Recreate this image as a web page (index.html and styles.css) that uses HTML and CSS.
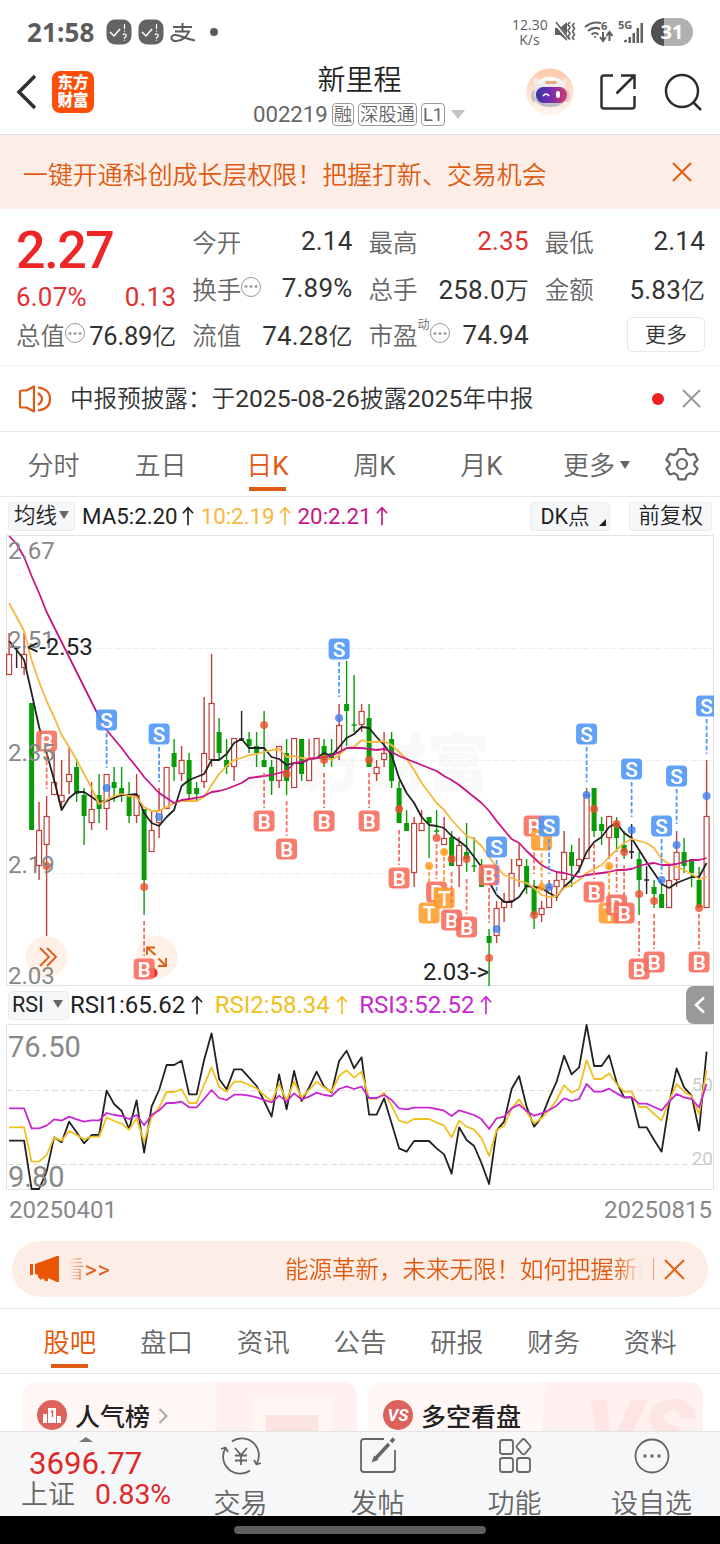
FILE: index.html
```html
<!DOCTYPE html>
<html lang="zh-CN">
<head>
    <meta charset="UTF-8">
    <meta name="viewport" content="width=device-width, initial-scale=1.0">
    <title>新里程 002219</title>
    <link rel="stylesheet" href="styles.css">
</head>
<body>
    <div class="status-bar">
        <span class="time">21:58</span>
        <svg class="app-dot" width="26" height="26" viewBox="0 0 26 26"><rect x=".5" y=".5" width="25" height="25" rx="8.5" fill="#636363"/><path d="M4 13l4 4 6-7" fill="none" stroke="#fff" stroke-width="1.5"/><path d="M18.500 5v5M18.500 11.500v1.200M16.800 15.700q1.700-1.500 3 0t-1.300 3v1M18.500 20.700v1" fill="none" stroke="#fff" stroke-width="1.200"/></svg>
        <svg class="app-dot" width="26" height="26" viewBox="0 0 26 26"><rect x=".5" y=".5" width="25" height="25" rx="8.5" fill="#636363"/><path d="M4 13l4 4 6-7" fill="none" stroke="#fff" stroke-width="1.5"/><path d="M18.500 5v5M18.500 11.500v1.200M16.800 15.700q1.700-1.500 3 0t-1.300 3v1M18.500 20.700v1" fill="none" stroke="#fff" stroke-width="1.200"/></svg>
        <svg class="alipay" width="26" height="20" viewBox="0 0 26 20" fill="none" stroke="#5c5c5c" stroke-width="2"><path d="M3 4h19M12.500 0v8M5 8.500h14c-2 5-7 9.500-12.500 9.500C.5 18-.5 12.500 5 12c5-.3 10 4 20 5.500"/></svg>
        <i class="dot"></i>
        <div class="status-right">
            <span class="speed">12.30<br>K/s</span>
            <svg width="22" height="22" viewBox="0 0 22 22"><path d="M1 7h5l7-6v19l-7-6H1z" fill="#606060"/><path d="M0 1l15 17" stroke="#fff" stroke-width="3"/><path d="M2 1l13 17" stroke="#606060" stroke-width="1.600"/><path d="M16 1l-2 2.500 2 3-2 3 2 3-2 3 2 3M20.500 2l-2 2.500 2 3-2 3 2 3-2 3 1.500 2.500" fill="none" stroke="#606060" stroke-width="1.600"/></svg>
            <svg class="wifi" width="30" height="24" viewBox="0 0 30 24" fill="none" stroke="#606060" stroke-width="2"><path d="M1 7Q8 1 17 3M4 11q6-5 12-2M7.500 14.500q3.500-3 7 0"/><circle cx="11" cy="17" r="1" fill="#606060" stroke="none"/><path d="M19 12v8M16 17l3 4 3-4M25.500 21v-8M22.500 16l3-4 3 4"/><text x="17" y="10" fill="#606060" stroke="none" class="net">6</text></svg>
            <svg class="signal" width="26" height="24" viewBox="0 0 26 24" fill="#606060"><text x="0" y="9" class="net">5G</text><circle cx="7.500" cy="21" r="1.500"/><rect x="10.500" y="17" width="2.500" height="6"/><rect x="14.500" y="13" width="2.500" height="10"/><rect x="18.500" y="8" width="2.500" height="15"/><rect x="22.500" y="3" width="2.500" height="20"/></svg>
            <span class="battery">31</span>
        </div>
    </div>

    <div class="header">
        <div class="header-left">
            <svg width="22" height="36" viewBox="0 0 22 36"><path d="M19 2L3 18l16 16" fill="none" stroke="#2e2e2e" stroke-width="3.500"/></svg>
            <div class="logo">东方<br>财富</div>
        </div>
        <div class="stock">
            <h1>新里程</h1>
            <div class="code">002219<span class="tag">融</span><span class="tag">深股通</span><span class="tag"><b>L1</b></span><i class="caret"></i></div>
        </div>
        <div class="header-right">
            <svg width="48" height="48" viewBox="0 0 48 48">
                <defs>
                    <linearGradient id="halo" x1="0" y1="0" x2="0" y2="1"><stop offset="0" stop-color="#ffc8a8"/><stop offset="1" stop-color="#fff8f3"/></linearGradient>
                    <linearGradient id="visor"><stop offset="0" stop-color="#3438a8"/><stop offset=".5" stop-color="#7a2db0"/><stop offset="1" stop-color="#d83c68"/></linearGradient>
                    <linearGradient id="shell" x1="0" y1="0" x2="0" y2="1"><stop offset="0" stop-color="#fff"/><stop offset="1" stop-color="#b9b9c4"/></linearGradient>
                </defs>
                <circle cx="24" cy="24" r="23.500" fill="url(#halo)"/>
                <path d="M7 9q6 0 8 7l-6 3zM41 10q-5 0-8 6l6 3z" fill="#f1eae8"/>
                <ellipse cx="8" cy="28" rx="3" ry="6" fill="#c6c0c4"/><ellipse cx="41" cy="28" rx="3" ry="6" fill="#d7cdd0"/>
                <path d="M8 25Q9 9 24 9t17 16q-1 14-17 14T8 25z" fill="url(#shell)"/>
                <rect x="19" y="13" width="12" height="3" rx="1.500" fill="#e4ad7f"/>
                <rect x="10" y="19" width="31" height="16" rx="7.500" fill="url(#visor)"/>
                <path d="M17 28q3-4 6 0" fill="none" stroke="#fff" stroke-width="1.700"/><rect x="30" y="23" width="4" height="7" rx="2" fill="#fff"/>
            </svg>
            <svg width="38" height="38" viewBox="0 0 38 38" fill="none" stroke="#2e2e2e" stroke-width="2.500"><path d="M14 2.500H5Q2.500 2.500 2.500 5v28q0 2.500 2.500 2.500h28q2.500 0 2.500-2.500V23M22 2.500h13.500V16M35 3L17.500 20.500"/></svg>
            <svg width="38" height="38" viewBox="0 0 38 38" fill="none" stroke="#2e2e2e" stroke-width="2.500"><circle cx="18" cy="18" r="16"/><path d="M29 29l8 8"/></svg>
        </div>
    </div>

    <div class="banner">
        <span>一键开通科创成长层权限！把握打新、交易机会</span>
        <svg width="20" height="20" viewBox="0 0 20 20"><path d="M1 1l18 18M19 1L1 19" stroke="#df5a12" stroke-width="2"/></svg>
    </div>

    <div class="quote">
        <div class="col">
            <div class="price">2.27</div>
            <div class="item change"><b>6.07%</b><b>0.13</b></div>
            <div class="item"><span>总值<i class="info"></i></span><b class="tight">76.89<em>亿</em></b></div>
        </div>
        <div class="col">
            <div class="item"><span>今开</span><b>2.14</b></div>
            <div class="item"><span>换手<i class="info"></i></span><b>7.89%</b></div>
            <div class="item"><span>流值</span><b>74.28<em>亿</em></b></div>
        </div>
        <div class="col">
            <div class="item"><span>最高</span><b class="red">2.35</b></div>
            <div class="item"><span>总手</span><b>258.0<em>万</em></b></div>
            <div class="item"><span>市盈<sup>动</sup><i class="info"></i></span><b>74.94</b></div>
        </div>
        <div class="col">
            <div class="item"><span>最低</span><b>2.14</b></div>
            <div class="item"><span>金额</span><b>5.83<em>亿</em></b></div>
            <div class="item end"><button class="more">更多</button></div>
        </div>
    </div>

    <div class="notice">
        <svg width="34" height="28" viewBox="0 0 34 28" fill="none" stroke="#df5a12" stroke-width="2.200" stroke-linejoin="round"><path d="M2 7q0-1.500 1.500-1.500h5L16 1.500v25l-7.500-4h-5Q2 22.500 2 21zM20 8q8 6 0 12"/><path d="M20 2.500q12 1.500 12 11.500T20 25.500"/></svg>
        <span class="notice-text">中报预披露：于<b>2025-08-26</b>披露<b>2025</b>年中报</span>
        <i class="unread"></i>
        <svg width="19" height="19" viewBox="0 0 19 19"><path d="M1 1l17 17M18 1L1 18" stroke="#999" stroke-width="2"/></svg>
    </div>

    <div class="periods">
        <a>分时</a>
        <a>五日</a>
        <a class="active">日<b>K</b></a>
        <a>周<b>K</b></a>
        <a>月<b>K</b></a>
        <a class="drop">更多<i class="tri"></i></a>
        <svg width="34" height="34" viewBox="0 0 34 34" fill="none" stroke="#666" stroke-width="2.200" stroke-linejoin="round"><path d="M13.500 2h7l1.200 4.300 3.200 1.800 4.400-1.200 3.300 6-3.200 3v2.600l3.200 3-3.300 6-4.400-1.200-3.200 1.800-1.200 4.200h-7l-1.200-4.200-3.200-1.800-4.400 1.200-3.300-6 3.200-3v-2.600l-3.200-3 3.300-6 4.400 1.200 3.200-1.800z"/><circle cx="17" cy="17" r="5"/></svg>
    </div>

    <div class="ma-bar">
        <span class="chip">均线<i class="tri"></i></span>
        <span class="ma ma5">MA5:2.20<svg class="up" viewBox="0 0 13 20"><path d="M6.500 20V1.500M1 7l5.500-6L12 7"/></svg></span>
        <span class="ma ma10">10:2.19<svg class="up" viewBox="0 0 13 20"><path d="M6.500 20V1.500M1 7l5.500-6L12 7"/></svg></span>
        <span class="ma ma20">20:2.21<svg class="up" viewBox="0 0 13 20"><path d="M6.500 20V1.500M1 7l5.500-6L12 7"/></svg></span>
        <span class="chip dk"><b>DK</b>点<i class="corner"></i></span>
        <span class="chip">前复权</span>
    </div>

    <svg id="kline" class="kline" width="714" height="451" viewBox="0 535 714 451"></svg>

    <div class="rsi-bar">
        <span class="chip"><b>RSI</b><i class="tri"></i></span>
        <span class="rsi rsi1">RSI1:65.62<svg class="up" viewBox="0 0 13 20"><path d="M6.500 20V1.500M1 7l5.500-6L12 7"/></svg></span>
        <span class="rsi rsi2">RSI2:58.34<svg class="up" viewBox="0 0 13 20"><path d="M6.500 20V1.500M1 7l5.500-6L12 7"/></svg></span>
        <span class="rsi rsi3">RSI3:52.52<svg class="up" viewBox="0 0 13 20"><path d="M6.500 20V1.500M1 7l5.500-6L12 7"/></svg></span>
        <span class="side-tab"><svg width="12" height="18" viewBox="0 0 12 18"><path d="M10 1.500L2 9l8 7.500" fill="none" stroke="#fff" stroke-width="2.500"/></svg></span>
    </div>

    <svg id="rsi" class="rsi-chart" width="714" height="167" viewBox="0 1024 714 167"></svg>

    <div class="dates"><span>20250401</span><span>20250815</span></div>

    <div class="promo">
        <svg width="30" height="28" viewBox="0 0 30 28" fill="#ea5504"><path d="M0 9h3v11H0zM5 9L27 1h2v26h-2l-9-4v3h-3l-2-3-2 2-3-3v-2l-3-1z"/></svg>
        <span class="promo-tail">看<b>&gt;&gt;</b></span>
        <span class="promo-text">能源革新，未来无限！如何把握新能</span>
        <i class="divider"></i>
        <svg width="21" height="21" viewBox="0 0 21 21"><path d="M1 1l19 19M20 1L1 20" stroke="#e2600f" stroke-width="2"/></svg>
    </div>

    <div class="sections">
        <a class="active">股吧</a>
        <a>盘口</a>
        <a>资讯</a>
        <a>公告</a>
        <a>研报</a>
        <a>财务</a>
        <a>资料</a>
    </div>

    <div class="cards">
        <div class="card rank">
            <svg width="30" height="30" viewBox="0 0 30 30"><circle cx="15" cy="15" r="15" fill="#dd625c"/><path d="M6 14h4v9H6zM11 8h8v15h-8zM20 16h4v7h-4z" fill="#fff"/><path d="M14 12l1.500-1v6" fill="none" stroke="#dd625c" stroke-width="1.500"/></svg>
            <span>人气榜</span>
            <svg width="10" height="16" viewBox="0 0 10 16"><path d="M1.500 1L8.500 8l-7 7" fill="none" stroke="#aaa" stroke-width="2"/></svg>
        </div>
        <div class="card versus">
            <i class="vs">VS</i>
            <span>多空看盘</span>
            <strong>VS</strong>
        </div>
    </div>

    <div class="bottom-bar">
        <div class="index">
            <i class="pull"></i>
            <div class="index-value">3696.77</div>
            <div class="index-row"><span>上证</span><b>0.83%</b></div>
        </div>
        <a>
            <svg width="42" height="38" viewBox="0 0 42 38" fill="none" stroke="#666" stroke-width="1.800"><path d="M12 4.500A17 17 0 0 1 36.500 27M30 33.500A17 17 0 0 1 5.500 11M1 12l4.500-1.500L8 15M41 26l-4.500 1.500L34 23"/><path d="M15 11l6 7 6-7M21 18v10M15 18.500h12M15 23.500h12"/></svg>
            交易
        </a>
        <a>
            <svg width="38" height="38" viewBox="0 0 38 38" fill="none" stroke="#666" stroke-width="1.800"><path d="M25 2H5Q2 2 2 5v27q0 3 3 3h28q3 0 3-3V13"/><path d="M17 21L30 7" stroke-width="3.500"/><path d="M14 24l1.500-4 2.500 2.500z" fill="#666"/><path d="M32 5l3-3.500" stroke-width="3.500"/></svg>
            发帖
        </a>
        <a>
            <svg width="34" height="38" viewBox="0 0 34 38" fill="none" stroke="#666" stroke-width="1.800"><rect x="2" y="3" width="13" height="14" rx="2.500"/><rect x="2" y="21" width="13" height="14" rx="2.500"/><rect x="19" y="21" width="13" height="14" rx="2.500"/><path d="M25.500 2q.8 0 1.500.8l5 5.700q1 1.200 0 2.400l-5 5.700q-1.500 1.500-3 0l-5-5.700q-1-1.200 0-2.400l5-5.700q.7-.8 1.500-.8z"/></svg>
            功能
        </a>
        <a>
            <svg width="38" height="38" viewBox="0 0 38 38" fill="none" stroke="#666" stroke-width="1.800"><circle cx="19" cy="19" r="16.500"/><path d="M10.500 19h3M17.500 19h3M24.500 19h3" stroke-width="3"/></svg>
            设自选
        </a>
    </div>
    <div class="nav-bar"><i></i></div>

    <script src="chart.js"></script>
</body>
</html>
```
FILE: styles.css
```css
* {
    margin: 0;
    padding: 0;
    box-sizing: border-box;
}

body {
    width: 720px;
    height: 1544px;
    overflow: hidden;
    background: #fff;
    color: #333;
    font-family: Roboto, "Noto Sans CJK SC", sans-serif;
    display: flex;
    flex-direction: column;
}

body > * {
    flex-shrink: 0;
}

i, em {
    font-style: normal;
}

b {
    font-weight: 400;
}

/* status bar */
.status-bar {
    height: 64px;
    padding-left: 27px;
    display: flex;
    align-items: center;
    color: #5c5c5c;
}

.time {
    width: 79px;
    font: 700 26px "Open Sans", sans-serif;
    letter-spacing: 0.1px;
    padding-bottom: 1px;
}

.app-dot {
    margin-right: 6px;
}

.alipay {
    margin: 2px 14px 0 0;
}

.dot {
    width: 8px;
    height: 8px;
    border-radius: 50%;
    background: #5c5c5c;
}

.status-right {
    margin-left: auto;
    padding-right: 27px;
    display: flex;
    align-items: center;
}

.speed {
    width: 35px;
    margin-right: 7px;
    text-align: center;
    font: 14px/15.5px "Open Sans", sans-serif;
}

.wifi {
    margin-left: 8px;
}

.signal {
    margin: 0 7px 0 4px;
}

.net {
    font: 700 11px "Open Sans", sans-serif;
}

.battery {
    width: 42px;
    height: 28px;
    border-radius: 14px;
    background: linear-gradient(to right, #525252 13px, #b0b0b0 13px);
    color: #fff;
    text-align: center;
    font: 700 20px/27px "Open Sans", sans-serif;
}

/* header */
.header {
    height: 71px;
    border-bottom: 1px solid #e2e2e2;
    display: flex;
    align-items: center;
    justify-content: space-between;
    padding: 0 18px 14px 16px;
}

.header-left, .header-right {
    width: 202px;
    display: flex;
    align-items: center;
}

.logo {
    width: 42px;
    height: 42px;
    margin-left: 14px;
    border-radius: 8px;
    background: #fe4d05;
    color: #fff;
    text-align: center;
    font-size: 15.5px;
    font-weight: 900;
    line-height: 18px;
    padding-top: 3px;
}

.header-right {
    justify-content: flex-end;
    gap: 27px;
}

.header-right svg:first-child {
    margin-right: -2px;
}

.stock {
    text-align: center;
}

.stock h1 {
    font-size: 28px;
    font-weight: 350;
    line-height: 34px;
    color: #222;
    margin-top: 10px;
    padding-left: 1px;
}

.code {
    display: flex;
    align-items: center;
    height: 33px;
    font-size: 22.2px;
    color: #666;
}

.tag {
    height: 23px;
    margin-left: 4px;
    padding: 0 1px;
    border: 1px solid #999;
    border-radius: 4px;
    font-size: 18.3px;
    line-height: 21px;
    font-weight: 350;
}

.caret {
    margin-left: 6px;
    border: 7px solid transparent;
    border-top: 9px solid #c4c4c4;
    border-bottom: none;
}

/* orange banner */
.banner {
    height: 74px;
    padding: 2px 28px 0 23px;
    background: #fceee6;
    color: #df5a12;
    font-size: 24.95px;
    font-weight: 350;
    display: flex;
    align-items: center;
    justify-content: space-between;
}

.banner svg {
    margin-bottom: 2px;
}

/* quote */
.quote {
    height: 157px;
    padding: 9px 15px 0 16px;
    border-bottom: 1px solid #f2f2f2;
    display: flex;
    gap: 16px;
}

.col {
    width: 160.3px;
}

.price {
    height: 64px;
    color: #ee2626;
    font-size: 52px;
    font-weight: 500;
    line-height: 66px;
    letter-spacing: -1.4px;
}

.item {
    height: 46.7px;
    display: flex;
    align-items: center;
    justify-content: space-between;
    font-size: 26px;
    letter-spacing: 0.2px;
    white-space: nowrap;
}

.item.change {
    height: 29.4px;
    color: #e03131;
}

.item span {
    display: flex;
    align-items: center;
    color: #666;
    font-size: 24.5px;
    font-weight: 350;
    letter-spacing: 0;
}

.item em {
    font-size: 24px;
    font-weight: 350;
    letter-spacing: 0;
}

.item b.tight {
    font-size: 25.5px;
    letter-spacing: -0.2px;
}

.item.end {
    justify-content: flex-end;
}

.item sup {
    font-size: 12px;
    line-height: 12px;
    margin-bottom: 20px;
}

.info {
    width: 20px;
    height: 20px;
    margin-bottom: 3px;
    border: 1.5px solid #999;
    border-radius: 50%;
    background: radial-gradient(circle, #999 1px, transparent 1.7px) center / 5px 5px repeat-x;
    background-clip: content-box;
    padding: 0 1px;
}

.red {
    color: #e03131;
}

.more {
    width: 78px;
    height: 35px;
    padding-bottom: 3px;
    background: #fff;
    border: 1px solid #e8e8e8;
    border-radius: 5px;
    color: #333;
    font: 350 21px/28px "Noto Sans CJK SC", sans-serif;
}

/* notice */
.notice {
    height: 66px;
    padding: 0 19px 0 18px;
    border-bottom: 1px solid #e6e6e6;
    display: flex;
    align-items: center;
    font-size: 23.6px;
}

.notice-text {
    margin: 0 0 3px 18px;
    font-weight: 350;
}

.notice-text b {
    font-size: 24.7px;
}

.unread {
    width: 12px;
    height: 12px;
    margin: 0 18px 0 auto;
    border-radius: 50%;
    background: #f02020;
}

/* period tabs */
.periods {
    height: 65px;
    border-bottom: 1px solid #e6e6e6;
    display: flex;
    align-items: center;
    color: #666;
    font-size: 26px;
    font-weight: 350;
}

.periods a {
    width: 107px;
    height: 64px;
    line-height: 68px;
    text-align: center;
}

.periods a.drop {
    width: 123px;
    margin-right: 7px;
}

.active {
    color: #df5a12;
    background: linear-gradient(#df5a12, #df5a12) center bottom 5px / 37px 4px no-repeat;
}

.tri {
    display: inline-block;
    vertical-align: middle;
    margin: -6px 0 0 5px;
    border: 5px solid transparent;
    border-top: 8px solid #666;
    border-bottom: none;
}

/* indicator bars */
.ma-bar, .rsi-bar {
    height: 38px;
    padding: 0 8px;
    display: flex;
    align-items: center;
    white-space: nowrap;
}

.chip {
    height: 29px;
    padding: 0 5px;
    border: 1px solid #eaecef;
    border-radius: 4px;
    background: #f6f7f9;
    color: #222;
    font-size: 21.5px;
    font-weight: 350;
    line-height: 26px;
}

.chip .tri {
    margin: -3px 0 0 2px;
}

.ma {
    font-size: 22.3px;
    margin-left: 7px;
}

.ma5, .rsi1 { color: #222; }
.ma10 { color: #f6b73c; }
.ma20 { color: #c71585; }
.rsi2 { color: #f0c020; }
.rsi3 { color: #c828d0; }

.up {
    width: 12px;
    height: 20px;
    margin-left: 4px;
    vertical-align: -2px;
    fill: none;
    stroke: currentColor;
    stroke-width: 1.8;
}

.chip.dk {
    width: 80px;
    margin: 0 19px 0 auto;
    padding-left: 9px;
    display: flex;
    align-items: flex-end;
}

.corner {
    margin: 0 0 4px 9px;
    border-left: 7px solid transparent;
    border-bottom: 7px solid #222;
}

.ma-bar .chip:last-child {
    padding: 0 8px;
    margin-right: 0;
}

.kline, .rsi-chart {
    display: block;
}

.rsi-bar {
    padding-right: 6px;
}

.rsi-bar .chip {
    width: 61px;
    padding-left: 3px;
}

.rsi-bar .chip .tri {
    margin-left: 9px;
}

.rsi {
    margin-left: 11.5px;
    font-size: 24px;
}

.rsi .up {
    margin-left: 6px;
}

.rsi1 {
    margin-left: 1px;
}

.side-tab {
    width: 28px;
    height: 38px;
    margin-left: auto;
    border-radius: 8px 0 0 8px;
    background: #999;
    display: flex;
    align-items: center;
    justify-content: center;
}

/* chart text */
.axis {
    fill: #888;
    font-size: 24px;
}

.axis-big {
    fill: #888;
    font-size: 29px;
}

.level {
    fill: #ccc;
    font-size: 19px;
    text-anchor: end;
}

.extreme {
    fill: #222;
    font-size: 24px;
}

.badge {
    fill: #fff;
    font-size: 21px;
    font-weight: 600;
    text-anchor: middle;
}

.watermark {
    fill: #f9f9f9;
    font-size: 63px;
    font-weight: 900;
}

.dates {
    height: 50px;
    padding: 3px 8px 0 9px;
    display: flex;
    justify-content: space-between;
    color: #888;
    font-size: 24px;
    line-height: 32px;
}

/* promo pill */
.promo {
    height: 56px;
    margin: 0 12px 11px;
    padding: 0 23px 0 18px;
    border-radius: 28px;
    background: #fceee6;
    color: #df5a12;
    font-size: 23.5px;
    font-weight: 350;
    display: flex;
    align-items: center;
}

.promo-tail, .promo-text {
    margin-bottom: 2px;
    overflow: hidden;
    white-space: nowrap;
    -webkit-background-clip: text;
    color: transparent;
}

.promo-tail {
    margin-left: 9px;
    text-indent: -8px;
    background-image: linear-gradient(to right, rgba(223, 90, 18, 0), #df5a12 20px);
}

.promo-tail b {
    letter-spacing: 0.6px;
}

.promo-text {
    width: 357px;
    margin-left: auto;
    background-image: linear-gradient(to left, rgba(223, 90, 18, 0), #df5a12 26px);
}

.divider {
    width: 1px;
    height: 22px;
    margin: 0 10px 0 11px;
    background: #e6a27c;
}

/* content tabs */
.sections {
    height: 66px;
    padding: 0 21.5px;
    border-top: 1px solid #e6e6e6;
    border-bottom: 1px solid #e6e6e6;
    display: flex;
    color: #666;
    font-size: 26.5px;
    font-weight: 350;
}

.sections a {
    flex: 1;
    line-height: 68px;
    text-align: center;
}

.sections .active {
    color: #ea5504;
}

.cards {
    height: 57px;
    padding: 8px 17px 0 22px;
    display: flex;
    gap: 11px;
    overflow: hidden;
}

.card {
    width: 335px;
    height: 80px;
    padding: 18px 15px;
    border-radius: 14px 14px 0 0;
    background: linear-gradient(95deg, #fff7f5 52%, #fff1ef 52%);
    display: flex;
    align-items: flex-start;
    color: #222;
    font-size: 25px;
    font-weight: 500;
    line-height: 36px;
    white-space: nowrap;
    overflow: hidden;
}

.card > * {
    flex-shrink: 0;
}

.card span {
    margin: 0 8px;
}

.card.rank {
    background: linear-gradient(#fbe3e1, #fbe3e1) 244px 33px / 52px 40px no-repeat,
        linear-gradient(#fff6f4, #fff6f4) 230px 15px / 82px 60px no-repeat,
        linear-gradient(to right, #fff7f5 58%, #fff1ef 58%);
}

.rank svg:last-child {
    margin-top: 8px;
}

.vs {
    width: 30px;
    height: 30px;
    border-radius: 50%;
    background: #dd625c;
    color: #fff;
    text-align: center;
    font: italic 700 17px/30px Roboto, sans-serif;
}

.card strong {
    margin: -7px 0 0 56px;
    color: #fce5e3;
    font: italic 900 88px/80px Roboto, sans-serif;
}

/* bottom bar */
.bottom-bar {
    height: 85px;
    border-top: 1px solid #e2e4e8;
    background: #f6f7f9;
    display: flex;
    color: #666;
    font-size: 27px;
    white-space: nowrap;
    overflow: hidden;
}

.bottom-bar a {
    width: 137px;
    padding-top: 5px;
    display: flex;
    flex-direction: column;
    align-items: center;
    font-weight: 350;
    line-height: 58px;
}

.bottom-bar svg {
    flex-shrink: 0;
}

.index {
    width: 172px;
    color: #e02828;
}

.pull {
    display: block;
    width: 0;
    margin: 5px 0 0 79px;
    border: 7px solid transparent;
    border-top: none;
    border-bottom: 5px solid #777;
}

.index-value {
    padding-left: 29px;
    font-size: 31.2px;
    line-height: 43px;
}

.index-row {
    padding-left: 21px;
    display: flex;
    gap: 20px;
    font-size: 28.4px;
    line-height: 20px;
}

.index-row span {
    color: #666;
    font-size: 27px;
    font-weight: 350;
}

.nav-bar {
    height: 28px;
    background: #000;
    display: flex;
    justify-content: center;
    align-items: center;
}

.nav-bar i {
    width: 252px;
    height: 8px;
    border-radius: 4px;
    background: #5e5e5e;
}
```
FILE: chart.js
```js
const GREEN = '#089c08';
const RED = '#c0403c';
const BLACK = '#222';

// [color, high, low, body top, body bottom]
const candles = [
    ['r',633,675,654,675],['k',648,668,648,648],['r',633,675,654,668],['g',703,830,703,830],
    ['r',802,880,830,866],['r',796,936,816,845],['r',750,795,782,795],['r',760,808,795,802],
    ['r',747,794,774,782],['g',759,802,767,794],['g',788,845,795,816],['r',782,830,809,823],
    ['g',774,823,795,809],['r',774,830,774,809],['g',767,802,782,788],['g',767,802,788,794],
    ['g',782,823,795,816],['r',774,823,795,816],['g',809,915,809,880],['r',810,852,830,852],
    ['r',788,838,810,823],['r',767,809,767,809],['g',739,781,753,767],['r',746,781,760,774],
    ['g',753,802,760,794],['g',782,802,788,794],['r',697,788,753,782],['r',654,767,703,760],
    ['g',718,760,732,753],['g',739,774,760,767],['r',738,781,738,767],['k',711,740,739,739],
    ['g',732,753,739,746],['g',732,767,746,753],['g',711,767,760,767],['g',760,795,767,781],
    ['r',746,788,746,781],['g',739,795,753,781],['r',738,788,738,788],['g',739,781,739,774],
    ['r',739,781,759,781],['r',738,759,738,759],['g',739,767,746,760],['g',739,767,753,758],
    ['r',704,760,725,753],['g',661,746,704,711],['g',675,732,725,725],['r',704,732,711,725],
    ['g',704,767,718,767],['r',760,781,767,774],['r',732,767,753,760],['g',732,788,739,781],
    ['g',781,823,788,823],['g',810,831,823,831],['r',817,887,823,873],['r',810,831,823,831],
    ['g',817,858,817,823],['g',810,835,831,831],['r',817,845,838,845],['g',831,866,837,866],
    ['r',837,887,845,866],['g',823,872,852,859],['g',837,872,866,866],['g',859,887,873,887],
    ['g',929,986,936,943],['r',901,943,908,936],['r',893,922,901,908],['r',859,908,873,901],
    ['r',844,887,859,866],['g',859,894,866,887],['g',880,929,887,915],['r',901,922,908,915],
    ['r',880,908,887,908],['r',873,901,880,887],['r',831,887,852,880],['g',845,887,852,866],
    ['r',838,873,859,866],['r',788,859,795,859],['g',788,837,788,831],['g',817,845,824,831],
    ['r',816,859,816,838],['g',817,852,823,838],['g',831,859,845,852],['k',824,859,852,852],
    ['g',852,915,859,880],['k',866,894,880,880],['g',880,908,887,894],['g',880,908,894,908],
    ['r',866,908,880,908],['r',831,887,852,880],['g',838,873,852,866],['g',859,887,859,873],
    ['g',867,908,880,908],['r',760,908,816,908]
];

const ma5 = [641,650,660,693,727,753,780,810,798,792,792,797,802,801,798,795,795,794,813,823,826,817,810,786,780,777,774,760,760,754,743,739,748,748,748,757,759,765,763,763,759,758,753,756,747,738,734,727,728,737,745,755,778,793,803,817,825,826,828,836,841,847,857,867,882,895,902,902,897,886,887,888,893,897,887,880,870,852,842,837,827,823,833,838,850,862,873,884,888,883,880,877,877,863];
const ma10 = [603,617,631,660,682,701,717,735,747,760,774,788,804,800,796,794,796,797,807,811,811,807,803,801,801,801,797,785,774,766,760,758,755,754,752,750,749,757,756,758,759,758,756,760,755,748,747,740,742,742,741,745,752,759,770,783,793,803,810,820,828,836,839,846,857,867,875,878,881,883,888,895,897,896,888,885,880,873,869,865,857,850,843,839,841,843,848,859,864,867,870,874,879,877];
const ma20 = [536,544,557,576,593,612,627,642,657,672,687,702,717,730,739,748,758,767,777,785,793,798,803,800,799,798,796,792,791,789,786,783,778,777,776,775,773,771,763,762,759,758,757,756,752,748,748,748,749,750,749,752,756,759,762,765,768,771,776,780,785,791,797,803,811,821,830,839,843,851,858,865,869,872,873,875,877,875,874,873,872,870,870,869,866,864,863,865,865,864,862,860,860,858];

// [type, candle index, badge y, dot y, dashes below the badge]
const marks = [
    ['B',5,741,866,1],['S',13,720,788,1],['B',18,969,887,0],['S',20,734,817,1],
    ['B',34,821,725,0],['B',37,849,774,0],['B',42,821,760,0],['S',44,649,718,1],
    ['B',48,821,760,0],['B',52,878,809,0],['T',56,913,866,0],['B',57,892,838,0],
    ['T',58,898,852,0],['B',59,920,859,0],['B',61,927,859,0],['B',64,875,958,1],
    ['S',65,847,929,1],['B',70,826,915,1],['T',71,840,887,1],['S',72,826,887,1],
    ['S',77,734,795,1],['B',78,892,809,0],['T',80,913,866,0],['B',81,905,824,0],
    ['B',82,913,852,0],['S',83,769,830,1],['B',84,969,894,0],['B',86,962,901,0],
    ['S',87,826,880,1],['S',89,776,845,1],['B',92,962,908,0],['S',93,706,796,1]
];

const rsi1 = [467,467,467,612,612,560,457,472,410,442,475,450,450,317,357,378,432,346,503,365,315,240,240,227,328,328,225,145,282,313,253,253,278,303,348,395,268,373,258,348,308,260,305,323,228,197,250,217,389,389,340,415,490,500,468,468,468,490,508,566,427,465,483,535,597,437,410,312,273,365,425,397,340,290,212,268,247,120,243,243,211,292,337,337,427,427,465,500,357,250,307,332,437,200];
const rsi2 = [427,427,427,530,530,510,458,467,438,450,463,455,455,397,408,416,434,400,470,397,368,321,321,313,354,354,300,247,305,320,290,290,300,310,330,349,297,347,290,337,315,290,308,320,273,256,278,260,341,341,323,362,407,414,402,402,402,412,422,457,407,425,434,460,513,435,423,370,343,380,415,400,375,345,301,323,312,226,282,282,265,297,320,320,366,366,387,406,348,297,320,333,387,255];
const rsi3 = [370,370,370,430,430,422,403,407,395,403,410,406,406,384,390,393,402,390,421,390,376,354,354,350,367,367,342,315,339,345,329,329,332,337,345,352,332,350,325,343,335,323,330,333,312,304,312,305,339,339,330,345,370,373,368,368,368,372,377,393,376,383,390,403,432,400,395,370,359,378,392,385,375,362,340,348,342,297,320,320,311,325,337,337,356,356,366,376,350,327,337,342,367,297];

const x = i => 9.1 + 7.5 * i;

function line(values, color) {
    const points = values.map((y, i) => x(i) + ',' + y).join(' ');
    return `<polyline points="${points}" fill="none" stroke="${color}" stroke-width="1.8" stroke-linejoin="round"/>`;
}

function grid(y, color) {
    return `<path d="M7 ${y}H713" stroke="${color}" stroke-dasharray="6 3"/>`;
}

function candle([type, high, low, top, bottom], i) {
    const cx = x(i);
    const color = type === 'g' ? GREEN : type === 'r' ? RED : BLACK;
    if (top === bottom) {
        return `<path d="M${cx} ${high}V${low}M${cx - 2.5} ${top}h5" stroke="${color}" stroke-width="1.4"/>`;
    }
    if (type === 'g') {
        return `<path d="M${cx} ${high}V${low}" stroke="${color}" stroke-width="1.4"/>
            <rect x="${cx - 2.5}" y="${top}" width="5" height="${bottom - top}" fill="${color}"/>`;
    }
    return `<path d="M${cx} ${high}V${top}M${cx} ${bottom}V${low}" stroke="${color}" stroke-width="1.4"/>
        <rect x="${cx - 2.5}" y="${top + .5}" width="5" height="${bottom - top - 1}" fill="#fff" stroke="${color}" stroke-width="1.2"/>`;
}

function mark([type, i, y, dotY, below]) {
    const cx = x(i);
    const color = { B: '#f8705f', S: '#5097f8', T: '#ffa030' }[type];
    const dot = { B: '#f04e2c', S: '#3d7ff0', T: '#ff9914' }[type];
    const from = below ? y + 13 : y - 48;
    return `<path d="M${cx} ${from}v35" stroke="${color}" stroke-width="1.8" stroke-dasharray="4.500 2.200"/>
        <circle cx="${cx}" cy="${dotY}" r="4" fill="${dot}" opacity=".8"/>
        <g opacity=".9"><rect x="${cx - 10.5}" y="${y - 10.5}" width="21" height="21" rx="4" fill="${color}"/>
        <text class="badge" x="${cx}" y="${y + 7.5}">${type}</text></g>`;
}

document.getElementById('kline').innerHTML = `
    <text class="watermark" x="238" y="786">东方财富</text>
    ${[648.5, 760.5, 873.5].map(y => grid(y, '#eee')).join('')}
    <path d="M6.500 985.500V535.500H713.500V985.500z" fill="none" stroke="#e2e2e2"/>
    <circle cx="157" cy="957" r="21" fill="#fff0e8"/>
    ${candles.map(candle).join('')}
    <circle cx="46.500" cy="957" r="21" fill="#fff0e8"/>
    <path d="M40 948l9 9-9 9M47 948l9 9-9 9" fill="none" stroke="#df5a12" stroke-width="1.800"/>
    <path d="M147 955v-7.500h8M147.500 948l8 7M166 958v8h-8M165.500 965.500l-7-7" fill="none" stroke="#df5a12" stroke-width="1.800"/>
    <circle cx="152.500" cy="973" r="5" fill="#f02020"/>
    ${line(ma5, BLACK)}${line(ma10, '#f6b73c')}${line(ma20, '#c71585')}
    ${marks.map(mark).join('')}
    <text class="axis" x="8" y="559">2.67</text>
    <text class="axis" x="8" y="648">2.51</text>
    <text class="axis" x="8" y="761">2.35</text>
    <text class="axis" x="8" y="873">2.19</text>
    <text class="axis" x="8" y="984">2.03</text>
    <text class="extreme" x="27" y="655">&lt;-2.53</text>
    <text class="extreme" x="423" y="980">2.03-&gt;</text>`;

const scale = values => values.map(v => 985 + v / 3);

document.getElementById('rsi').innerHTML = `
    ${grid(1090.5, '#ddd')}${grid(1164.5, '#ddd')}
    <path d="M6.500 1189.500V1024.500H713.500V1189.500z" fill="none" stroke="#e2e2e2"/>
    <text class="axis-big" x="8" y="1057">76.50</text>
    <text class="level" x="713" y="1091">50</text>
    <text class="level" x="713" y="1165">20</text>
    ${line(scale(rsi1), BLACK)}${line(scale(rsi2), '#f0c020')}${line(scale(rsi3), '#c828d0')}
    <text class="axis-big" x="8" y="1187">9.80</text>`;
```
